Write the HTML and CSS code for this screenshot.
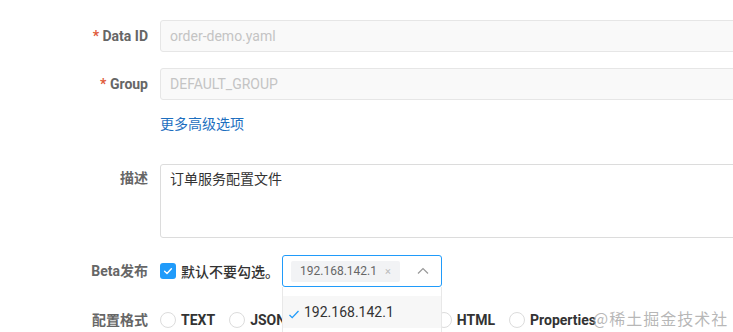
FILE: index.html
```html
<!DOCTYPE html>
<html lang="zh-CN">
<head>
  <meta charset="UTF-8">
  <title>新建配置</title>
  <link rel="stylesheet" href="styles.css">
</head>
<body>
  <div class="config-form">
    <div class="form-row row-dataid">
      <label class="form-label"><span class="required">*</span> Data ID</label>
      <div class="form-control"><input class="text-input" type="text" placeholder="order-demo.yaml" disabled></div>
    </div>

    <div class="form-row row-group">
      <label class="form-label"><span class="required">*</span> Group</label>
      <div class="form-control"><input class="text-input" type="text" placeholder="DEFAULT_GROUP" disabled></div>
    </div>

    <div class="form-row row-more">
      <label class="form-label"></label>
      <div class="form-control"><a class="more-link" href="#">更多高级选项</a></div>
    </div>

    <div class="form-row row-desc">
      <label class="form-label label-top">描述</label>
      <div class="form-control"><textarea class="desc-input">订单服务配置文件</textarea></div>
    </div>

    <div class="form-row row-beta">
      <label class="form-label">Beta发布</label>
      <div class="form-control beta-control">
        <span class="checkbox checked">
          <svg viewBox="0 0 16 16" width="16" height="16"><path d="M4.6 8.2 L7 10.4 L11.4 5.8" fill="none" stroke="#fff" stroke-width="1.4" stroke-linecap="round" stroke-linejoin="round"/></svg>
        </span>
        <span class="checkbox-text">默认不要勾选。</span>
        <div class="select-wrap">
          <div class="select-box">
            <span class="tag">192.168.142.1 <span class="tag-close">×</span></span>
            <svg class="select-arrow" viewBox="0 0 14 14" width="14" height="14"><path d="M2 9.5 L7 4.5 L12 9.5" fill="none" stroke="#999" stroke-width="1.2"/></svg>
          </div>
          <div class="select-menu">
            <div class="menu-item selected">
              <svg class="menu-check" viewBox="0 0 12 12" width="12" height="12"><path d="M1.5 7 L4.2 9.6 L10.5 3" fill="none" stroke="#209bfa" stroke-width="1.3"/></svg>
              192.168.142.1
            </div>
          </div>
        </div>
      </div>
    </div>

    <div class="form-row row-type">
      <label class="form-label">配置格式</label>
      <div class="form-control radio-group">
        <label class="radio"><span class="radio-dot"></span>TEXT</label>
        <label class="radio"><span class="radio-dot"></span>JSON</label>
        <label class="radio"><span class="radio-dot"></span>XML</label>
        <label class="radio"><span class="radio-dot"></span>YAML</label>
        <label class="radio"><span class="radio-dot"></span>HTML</label>
        <label class="radio"><span class="radio-dot"></span>Properties</label>
      </div>
    </div>
  </div>

  <div class="watermark">@稀土掘金技术社区</div>
</body>
</html>
```

FILE: styles.css
```css
body {
  margin: 0;
  background: #fff;
  font-family: Roboto, "Noto Sans CJK SC", sans-serif;
  font-size: 14px;
  color: #333;
  overflow: hidden;
}
.config-form {
  padding-top: 20px;
}
.form-row {
  display: flex;
  align-items: center;
}
.form-label {
  width: 148px;
  margin-right: 12px;
  flex-shrink: 0;
  text-align: right;
  font-weight: bold;
  color: #666;
  line-height: 32px;
}
.label-top {
  line-height: 28px;
  align-self: flex-start;
}
.required {
  color: #e05a3a;
}
.form-control {
  flex: 1;
}
.row-group {
  margin-top: 16px;
}
.row-more {
  margin-top: 14px;
  height: 20px;
}
.row-more .form-label {
  line-height: 20px;
}
.row-desc {
  margin-top: 30px;
  align-items: flex-start;
}
.row-beta {
  margin-top: 17px;
}
.row-type {
  margin-top: 17px;
}
.text-input {
  box-sizing: border-box;
  width: 620px;
  height: 32px;
  padding: 0 9px;
  border: 1px solid #e6e6e6;
  border-radius: 3px;
  background: #f9f9f9;
  font-family: Roboto, sans-serif;
  font-size: 14px;
}
.text-input::placeholder {
  color: #c4c4c4;
}
.more-link {
  color: #1d6fbf;
  text-decoration: none;
  line-height: 20px;
}
.desc-input {
  box-sizing: border-box;
  display: block;
  width: 620px;
  height: 74px;
  padding: 1px 9px;
  border: 1px solid #dcdcdc;
  border-radius: 3px;
  resize: none;
  font-family: "Noto Sans CJK SC", sans-serif;
  font-size: 14px;
  line-height: 24px;
  color: #333;
}
.beta-control {
  display: flex;
  align-items: center;
}
.checkbox {
  width: 16px;
  height: 16px;
  border-radius: 3px;
  background: #209bfa;
  display: inline-flex;
}
.checkbox-text {
  margin-left: 5px;
  color: #333;
  font-weight: 500;
}
.select-wrap {
  position: relative;
  margin-left: 3px;
}
.select-box {
  box-sizing: border-box;
  width: 160px;
  height: 32px;
  border: 1px solid #209bfa;
  border-radius: 3px;
  display: flex;
  align-items: center;
  padding: 0 8px;
  justify-content: space-between;
}
.tag {
  background: #f2f3f5;
  color: #666;
  font-size: 12px;
  line-height: 20px;
  padding: 0 9px;
  border-radius: 2px;
}
.tag-close {
  color: #bbb;
  font-size: 11px;
  margin-left: 5px;
}
.select-arrow {
  margin-right: 3px;
}
.select-menu {
  position: absolute;
  top: 32px;
  left: 0;
  width: 160px;
  box-sizing: border-box;
  background: #fff;
  border: 1px solid #e8e8e8;
  border-top: none;
  padding-top: 9px;
  height: 60px;
  z-index: 2;
}
.menu-item {
  height: 32px;
  line-height: 32px;
  background: #f7f7f7;
  color: #333;
  font-size: 14px;
  padding-left: 5px;
  display: flex;
  align-items: center;
}
.menu-check {
  margin-right: 4px;
  margin-top: 3px;
}
.radio-group {
  display: flex;
  align-items: center;
  white-space: nowrap;
}
.radio {
  display: inline-flex;
  align-items: center;
  font-weight: bold;
  color: #333;
  margin-right: 14px;
  line-height: 32px;
}
.radio-dot {
  box-sizing: border-box;
  width: 16px;
  height: 16px;
  border: 1px solid #dcdcdc;
  border-radius: 50%;
  margin-right: 5px;
}
.watermark {
  position: absolute;
  left: 593px;
  top: 308px;
  font-family: "Noto Sans CJK SC", sans-serif;
  font-size: 16px;
  line-height: 20px;
  letter-spacing: 1px;
  color: rgba(160, 160, 160, 0.75);
}
```
